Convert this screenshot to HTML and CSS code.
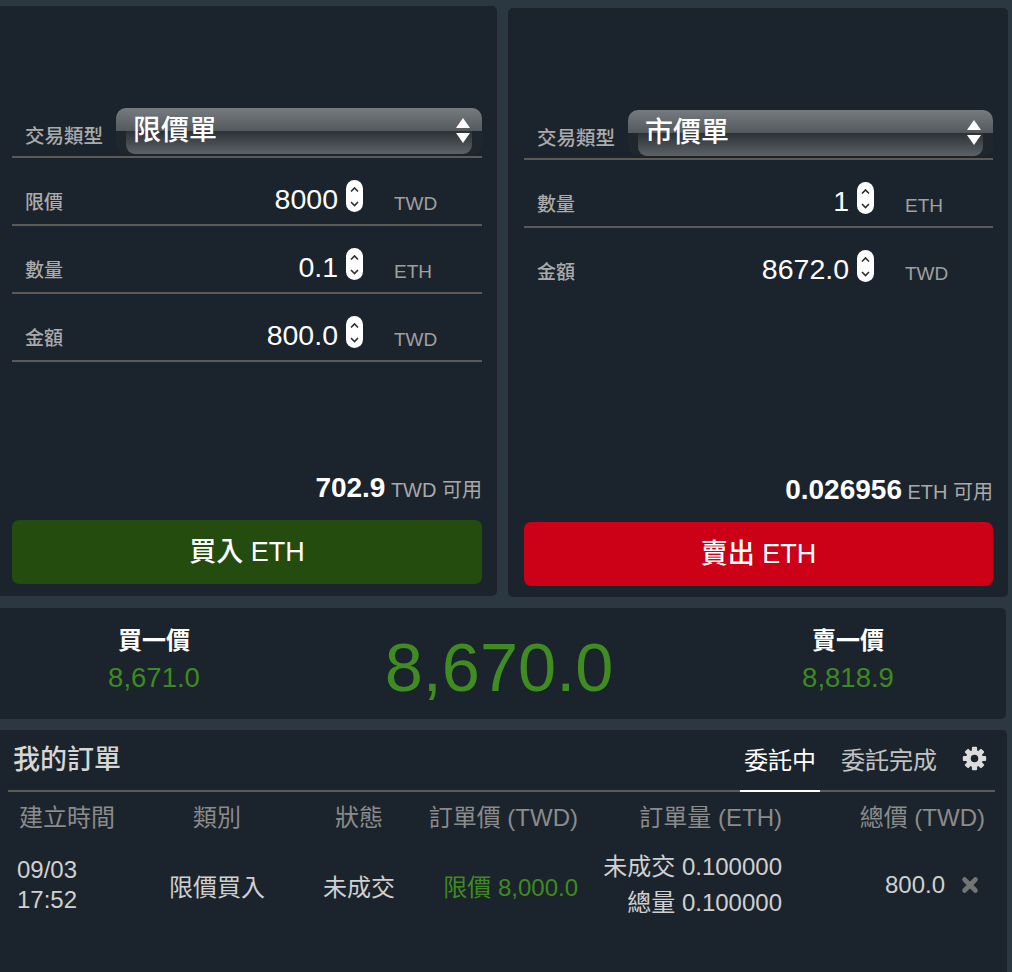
FILE: index.html
```html
<!DOCTYPE html>
<html lang="zh-Hant">
<head>
<meta charset="utf-8">
<title>交易</title>
<link rel="stylesheet" href="styles.css">
</head>
<body>
<div class="page">
  <div class="top">
    <section class="panel trade trade-buy">
      <div class="row row-select">
        <span class="label">交易類型</span>
        <div class="select">
          <span class="select-text">限價單</span>
          <svg class="select-arrows" width="14" height="26" viewBox="0 0 14 26"><polygon points="7,0 14,10 0,10" fill="#fff"/><polygon points="0,15 14,15 7,25" fill="#fff"/></svg>
        </div>
      </div>
      <div class="row">
        <span class="label">限價</span>
        <span class="value">8000</span>
        <svg class="spin" width="17" height="32" viewBox="0 0 17 32"><rect width="17" height="32" rx="8.5" fill="#fff"/><path d="M5 11.5 L8.5 8 L12 11.5" stroke="#2a2f33" stroke-width="1.6" fill="none"/><path d="M5 22 L8.5 25.5 L12 22" stroke="#2a2f33" stroke-width="1.6" fill="none"/></svg>
        <span class="unit">TWD</span>
      </div>
      <div class="row">
        <span class="label">數量</span>
        <span class="value">0.1</span>
        <svg class="spin" width="17" height="32" viewBox="0 0 17 32"><rect width="17" height="32" rx="8.5" fill="#fff"/><path d="M5 11.5 L8.5 8 L12 11.5" stroke="#2a2f33" stroke-width="1.6" fill="none"/><path d="M5 22 L8.5 25.5 L12 22" stroke="#2a2f33" stroke-width="1.6" fill="none"/></svg>
        <span class="unit">ETH</span>
      </div>
      <div class="row">
        <span class="label">金額</span>
        <span class="value">800.0</span>
        <svg class="spin" width="17" height="32" viewBox="0 0 17 32"><rect width="17" height="32" rx="8.5" fill="#fff"/><path d="M5 11.5 L8.5 8 L12 11.5" stroke="#2a2f33" stroke-width="1.6" fill="none"/><path d="M5 22 L8.5 25.5 L12 22" stroke="#2a2f33" stroke-width="1.6" fill="none"/></svg>
        <span class="unit">TWD</span>
      </div>
      <div class="avail"><b>702.9</b> <span>TWD 可用</span></div>
      <button class="btn btn-buy">買入 ETH</button>
    </section>

    <section class="panel trade trade-sell">
      <div class="row row-select">
        <span class="label">交易類型</span>
        <div class="select">
          <span class="select-text">市價單</span>
          <svg class="select-arrows" width="14" height="26" viewBox="0 0 14 26"><polygon points="7,0 14,10 0,10" fill="#fff"/><polygon points="0,15 14,15 7,25" fill="#fff"/></svg>
        </div>
      </div>
      <div class="row">
        <span class="label">數量</span>
        <span class="value">1</span>
        <svg class="spin" width="17" height="32" viewBox="0 0 17 32"><rect width="17" height="32" rx="8.5" fill="#fff"/><path d="M5 11.5 L8.5 8 L12 11.5" stroke="#2a2f33" stroke-width="1.6" fill="none"/><path d="M5 22 L8.5 25.5 L12 22" stroke="#2a2f33" stroke-width="1.6" fill="none"/></svg>
        <span class="unit">ETH</span>
      </div>
      <div class="row no-line">
        <span class="label">金額</span>
        <span class="value">8672.0</span>
        <svg class="spin" width="17" height="32" viewBox="0 0 17 32"><rect width="17" height="32" rx="8.5" fill="#fff"/><path d="M5 11.5 L8.5 8 L12 11.5" stroke="#2a2f33" stroke-width="1.6" fill="none"/><path d="M5 22 L8.5 25.5 L12 22" stroke="#2a2f33" stroke-width="1.6" fill="none"/></svg>
        <span class="unit">TWD</span>
      </div>
      <div class="avail"><b>0.026956</b> <span>ETH 可用</span></div>
      <button class="btn btn-sell">賣出 ETH</button>
    </section>
  </div>

  <section class="panel ticker">
    <div class="tick-side">
      <div class="tick-label">買一價</div>
      <div class="tick-price">8,671.0</div>
    </div>
    <div class="tick-main">8,670.0</div>
    <div class="tick-side">
      <div class="tick-label">賣一價</div>
      <div class="tick-price">8,818.9</div>
    </div>
  </section>

  <section class="panel orders">
    <div class="orders-head">
      <h2 class="orders-title">我的訂單</h2>
      <span class="tab tab-active">委託中</span>
      <span class="tab">委託完成</span>
      <svg class="gear" width="25" height="25" viewBox="0 0 24 24">
        <defs>
          <mask id="gearhole"><rect width="24" height="24" fill="#fff"/><circle cx="12" cy="12" r="3.6" fill="#000"/></mask>
          <rect id="tooth" x="9.5" y="0.8" width="5" height="6" rx="1"/>
        </defs>
        <g fill="#dcdcdc" mask="url(#gearhole)">
          <circle cx="12" cy="12" r="8.2"/>
          <use href="#tooth"/>
          <use href="#tooth" transform="rotate(45 12 12)"/>
          <use href="#tooth" transform="rotate(90 12 12)"/>
          <use href="#tooth" transform="rotate(135 12 12)"/>
          <use href="#tooth" transform="rotate(180 12 12)"/>
          <use href="#tooth" transform="rotate(225 12 12)"/>
          <use href="#tooth" transform="rotate(270 12 12)"/>
          <use href="#tooth" transform="rotate(315 12 12)"/>
        </g>
      </svg>
    </div>
    <div class="otable">
      <div class="th c1">建立時間</div>
      <div class="th c2">類別</div>
      <div class="th c3">狀態</div>
      <div class="th c4">訂單價 (TWD)</div>
      <div class="th c5">訂單量 (ETH)</div>
      <div class="th c6">總價 (TWD)</div>

      <div class="td c1 stack-time"><span>09/03</span><span>17:52</span></div>
      <div class="td c2">限價買入</div>
      <div class="td c3">未成交</div>
      <div class="td c4 green">限價 8,000.0</div>
      <div class="td c5 stack-qty"><span>未成交 0.100000</span><span>總量 0.100000</span></div>
      <div class="td c6"><span>800.0</span>
        <svg class="cancel" width="18" height="18" viewBox="0 0 18 18"><path d="M3.5 3.5 L14.5 14.5 M14.5 3.5 L3.5 14.5" stroke="#747474" stroke-width="4.6" stroke-linecap="round"/></svg>
      </div>
    </div>
  </section>
</div>
</body>
</html>
```

FILE: styles.css
```css
html, body {
  margin: 0;
  padding: 0;
}

body {
  width: 1012px;
  height: 972px;
  overflow: hidden;
  background: #2b3741;
  font-family: "Liberation Sans", "Noto Sans CJK TC", sans-serif;
  color: #fff;
}

.page {
  display: flex;
  flex-direction: column;
}

.top {
  display: flex;
  align-items: flex-start;
  gap: 11px;
}

.panel {
  background: #1b242c;
  border-radius: 5px;
}

/* trade panels */
.trade {
  display: flex;
  flex-direction: column;
  box-sizing: border-box;
}

.trade-buy {
  width: 497px;
  height: 590px;
  margin-top: 6px;
  padding: 102px 15px 12px 12px;
  border-radius: 0 5px 5px 0;
}

.trade-sell {
  width: 500px;
  height: 589px;
  margin-top: 8px;
  padding: 102px 15px 11px 16px;
}

.row {
  display: flex;
  align-items: flex-end;
  height: 66px;
  border-bottom: 2px solid #5d5955;
}

.row.no-line {
  border-bottom-color: transparent;
}

.row-select {
  height: auto;
}

.label {
  flex: 1;
  padding-left: 13px;
  font-size: 19px;
  line-height: 24px;
  color: #ababab;
  font-weight: 500;
  margin-bottom: 9px;
  white-space: nowrap;
}

.row-select .label {
  flex: 0 0 auto;
  margin-bottom: 8px;
  margin-right: 13px;
  font-size: 19.5px;
}

.select {
  position: relative;
  flex: 1;
  height: 46px;
  margin-bottom: 2px;
  box-sizing: border-box;
  padding: 0 12px 0 17px;
  display: flex;
  align-items: center;
  justify-content: space-between;
  border-radius: 10px;
  background: linear-gradient(to bottom, #767b80 0, #54595e 23px, #1f262c 23px, #1f262c 100%);
}

.select::before {
  content: "";
  position: absolute;
  left: 10px;
  right: 10px;
  top: 23px;
  bottom: 0;
  border-radius: 0 0 9px 9px;
  background: linear-gradient(to bottom, #2b3136 0, #5d6267 100%);
}

.select-text {
  position: relative;
  font-size: 28px;
  line-height: 32px;
  font-weight: 500;
  color: #fff;
  margin-top: 0;
}

.select-arrows {
  position: relative;
  margin-top: -1px;
}

.value {
  font-size: 28.5px;
  line-height: 32px;
  color: #fff;
  margin-bottom: 9px;
  text-align: right;
}

.spin {
  display: block;
  margin-left: 8px;
  margin-bottom: 12px;
}

.unit {
  width: 119px;
  box-sizing: border-box;
  padding-left: 31px;
  font-size: 19px;
  line-height: 24px;
  color: #a0a0a0;
  margin-bottom: 8px;
}

.avail {
  margin-top: auto;
  margin-bottom: 12px;
  text-align: right;
  line-height: 32px;
  white-space: nowrap;
}

.avail b {
  font-size: 28px;
  font-weight: bold;
  color: #fff;
}

.avail span {
  font-size: 20px;
  color: #a9a9a9;
  margin-left: 1px;
}

.btn {
  display: block;
  width: 100%;
  height: 64px;
  border: 0;
  border-radius: 7px;
  font-family: inherit;
  font-size: 27px;
  color: #fff;
  font-weight: 500;
  padding: 0 0 5px;
}

.btn-buy {
  background: #244c0f;
}

.btn-sell {
  background: #cc0017;
}

/* ticker */
.ticker {
  margin-top: 11px;
  width: 1006px;
  height: 111px;
  border-radius: 0 5px 5px 0;
  display: grid;
  grid-template-columns: 308px 1fr 316px;
}

.tick-side {
  display: flex;
  flex-direction: column;
  align-items: center;
  padding-top: 18px;
}

.tick-label {
  font-size: 24px;
  line-height: 30px;
  font-weight: bold;
  color: #fff;
}

.tick-price {
  margin-top: 6px;
  font-size: 27.5px;
  line-height: 32px;
  color: #3f8a20;
}

.tick-main {
  align-self: center;
  text-align: center;
  font-size: 68.5px;
  line-height: 80px;
  color: #418c22;
  margin-top: 9px;
}

.green {
  color: #3f8a20;
}

/* orders */
.orders {
  margin-top: 11px;
  width: 1007px;
  height: 260px;
  border-radius: 0 5px 0 0;
}

.orders-head {
  display: flex;
  align-items: center;
  height: 60px;
  margin: 0 12px 0 8px;
  border-bottom: 2px solid #5d5955;
}

.orders-title {
  flex: 1;
  margin: 0;
  padding-left: 5px;
  font-size: 27px;
  line-height: 60px;
  font-weight: 500;
  color: #d6d6d6;
}

.tab {
  align-self: stretch;
  display: flex;
  align-items: center;
  padding: 0 4px 4px;
  font-size: 24px;
  color: #c2c2c2;
  margin-left: 17px;
}

.tab-active {
  color: #fff;
  border-bottom: 2px solid #fff;
  margin-bottom: -2px;
  padding-bottom: 4px;
}

.gear {
  display: block;
  margin-left: 21px;
  margin-right: 8px;
  margin-top: -4px;
}

.otable {
  display: grid;
  grid-template-columns: 142px 134px 150px 144px 204px 1fr;
  margin: 0 12px 0 8px;
}

.th {
  height: 54px;
  box-sizing: border-box;
  padding-bottom: 7px;
  display: flex;
  align-items: center;
  font-size: 24px;
  color: #8b8b8b;
  white-space: nowrap;
}

.td {
  height: 78px;
  display: flex;
  align-items: center;
  font-size: 24px;
  color: #d0d0d0;
  white-space: nowrap;
}

.c1 {
  padding-left: 11px;
}

.c2, .c3 {
  justify-content: center;
}

.c4, .c5, .c6 {
  justify-content: flex-end;
}

.th.c6 {
  padding-right: 10px;
}

.td.green {
  color: #3f8a20;
}

.stack-time {
  flex-direction: column;
  align-items: flex-start;
  justify-content: center;
  line-height: 30px;
  padding-left: 9px;
}

.stack-qty {
  flex-direction: column;
  align-items: flex-end;
  justify-content: center;
  line-height: 36px;
}

.cancel {
  display: block;
  margin-left: 16px;
  margin-right: 16px;
  margin-top: 0;
}
```
